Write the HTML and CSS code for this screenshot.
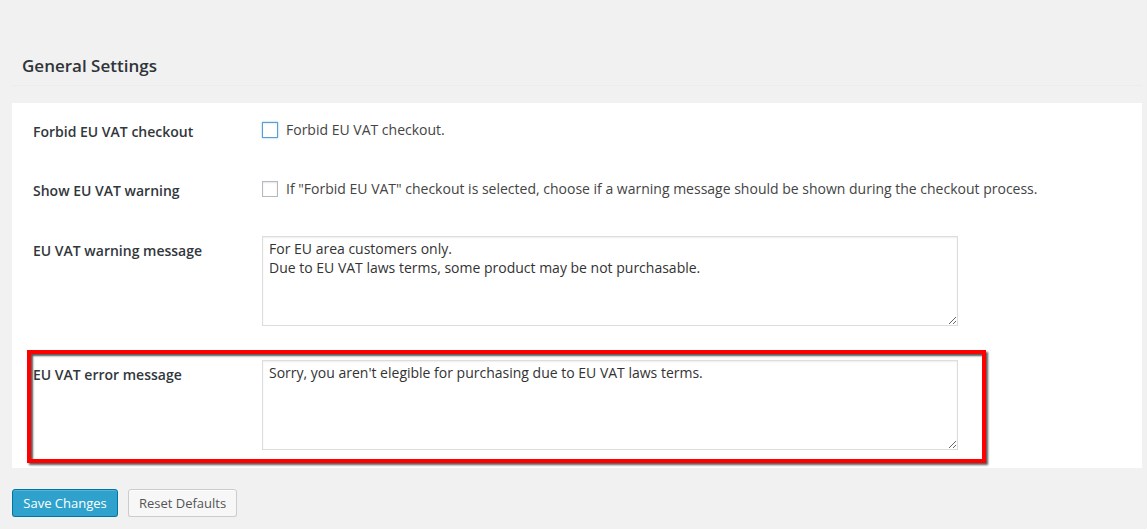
FILE: index.html
```html
<!DOCTYPE html>
<html lang="en">
<head>
<meta charset="utf-8">
<title>General Settings</title>
<link rel="stylesheet" href="styles.css">
</head>
<body>
<div class="wrap">
  <div class="header">
    <h3 class="title">General Settings</h3>
  </div>
  <div class="panel">
    <div class="row row-check">
      <div class="label">Forbid EU VAT checkout</div>
      <div class="control">
        <label class="check-line"><input type="checkbox" class="cb cb-focus"> <span>Forbid EU VAT checkout.</span></label>
      </div>
    </div>
    <div class="row row-check">
      <div class="label">Show EU VAT warning</div>
      <div class="control">
        <label class="check-line"><input type="checkbox" class="cb"> <span>If "Forbid EU VAT" checkout is selected, choose if a warning message should be shown during the checkout process.</span></label>
      </div>
    </div>
    <div class="row row-text row-warning">
      <div class="label">EU VAT warning message</div>
      <div class="control">
        <textarea class="ta">For EU area customers only.
Due to EU VAT laws terms, some product may be not purchasable.</textarea>
      </div>
    </div>
    <div class="row row-text row-error">
      <div class="label">EU VAT error message</div>
      <div class="control">
        <textarea class="ta">Sorry, you aren't elegible for purchasing due to EU VAT laws terms.</textarea>
      </div>
      <div class="highlight"></div>
    </div>
  </div>
  <div class="actions">
    <button class="btn btn-primary">Save Changes</button>
    <button class="btn btn-secondary">Reset Defaults</button>
  </div>
</div>
</body>
</html>
```
FILE: styles.css
```css
html, body {
  margin: 0;
  padding: 0;
  background: #f1f1f1;
  font-family: "Open Sans", "Liberation Sans", sans-serif;
  color: #23282d;
}

.wrap {
  padding-left: 12px;
  width: 1130px;
}

.header {
  padding: 54px 0 7px 10px;
  border-bottom: 1px solid #ececec;
  margin-bottom: 17px;
}

.title {
  margin: 0;
  font-size: 17px;
  font-weight: 600;
  line-height: 24px;
  color: #2f3439;
}

.panel {
  background: #fff;
  display: flex;
  flex-direction: column;
}

.row {
  display: grid;
  grid-template-columns: 250px 1fr;
  position: relative;
}

.label {
  padding-left: 21px;
  font-size: 14px;
  font-weight: 600;
  line-height: 20px;
  color: #32373c;
}

.row-check {
  height: 59px;
}
.row-check .label {
  padding-top: 19px;
}
.row-check .control {
  padding-top: 17px;
}

.check-line {
  display: flex;
  align-items: center;
  gap: 8px;
  font-size: 14px;
  line-height: 20px;
  color: #444;
}

.cb {
  appearance: none;
  -webkit-appearance: none;
  margin: 0;
  width: 16px;
  height: 16px;
  border: 1px solid #b4b9be;
  background: #fff;
  box-shadow: inset 0 1px 2px rgba(0,0,0,.1);
  box-sizing: border-box;
  flex: none;
}

.cb-focus {
  border-color: #5b9dd9;
  box-shadow: 0 0 2px rgba(30,140,190,.5), inset 0 1px 2px rgba(0,0,0,.07);
}

.row-warning {
  height: 124px;
}
.row-warning .label {
  padding-top: 20px;
}
.row-error {
  height: 123px;
}
.row-error .label {
  padding-top: 20px;
}
.row-text .control {
  padding-top: 15px;
}

.ta {
  display: block;
  box-sizing: border-box;
  width: 696px;
  height: 90px;
  margin: 0;
  padding: 2px 6px;
  border: 1px solid #ddd;
  box-shadow: inset 0 1px 2px rgba(0,0,0,.07);
  font-family: "Open Sans", "Liberation Sans", sans-serif;
  font-size: 14px;
  line-height: 19px;
  color: #333;
  background: #fff;
  resize: both;
}

.highlight {
  position: absolute;
  left: 15px;
  top: 5px;
  width: 959px;
  height: 113px;
  box-sizing: border-box;
  border: 4px solid #ff0000;
  box-shadow: 2px 2px 2px rgba(0,0,0,.65), inset 2px 2px 2px rgba(0,0,0,.65);
  pointer-events: none;
}

.actions {
  display: flex;
  gap: 10px;
  margin-top: 21px;
}

.btn {
  height: 28px;
  padding: 0 10px 1px;
  border-radius: 3px;
  font-family: "Open Sans", "Liberation Sans", sans-serif;
  font-size: 13px;
  line-height: 26px;
  box-sizing: border-box;
  white-space: nowrap;
  cursor: pointer;
}

.btn-primary {
  width: 106px;
  background: #2ea2cc;
  border: 1px solid #0074a2;
  color: #fff;
  box-shadow: inset 0 1px 0 rgba(120,200,230,.5), 0 1px 0 rgba(0,0,0,.15);
}

.btn-secondary {
  width: 109px;
  padding: 0 0 1px;
  background: #f7f7f7;
  border: 1px solid #ccc;
  color: #555;
  box-shadow: inset 0 1px 0 #fff, 0 1px 0 rgba(0,0,0,.08);
}
```
